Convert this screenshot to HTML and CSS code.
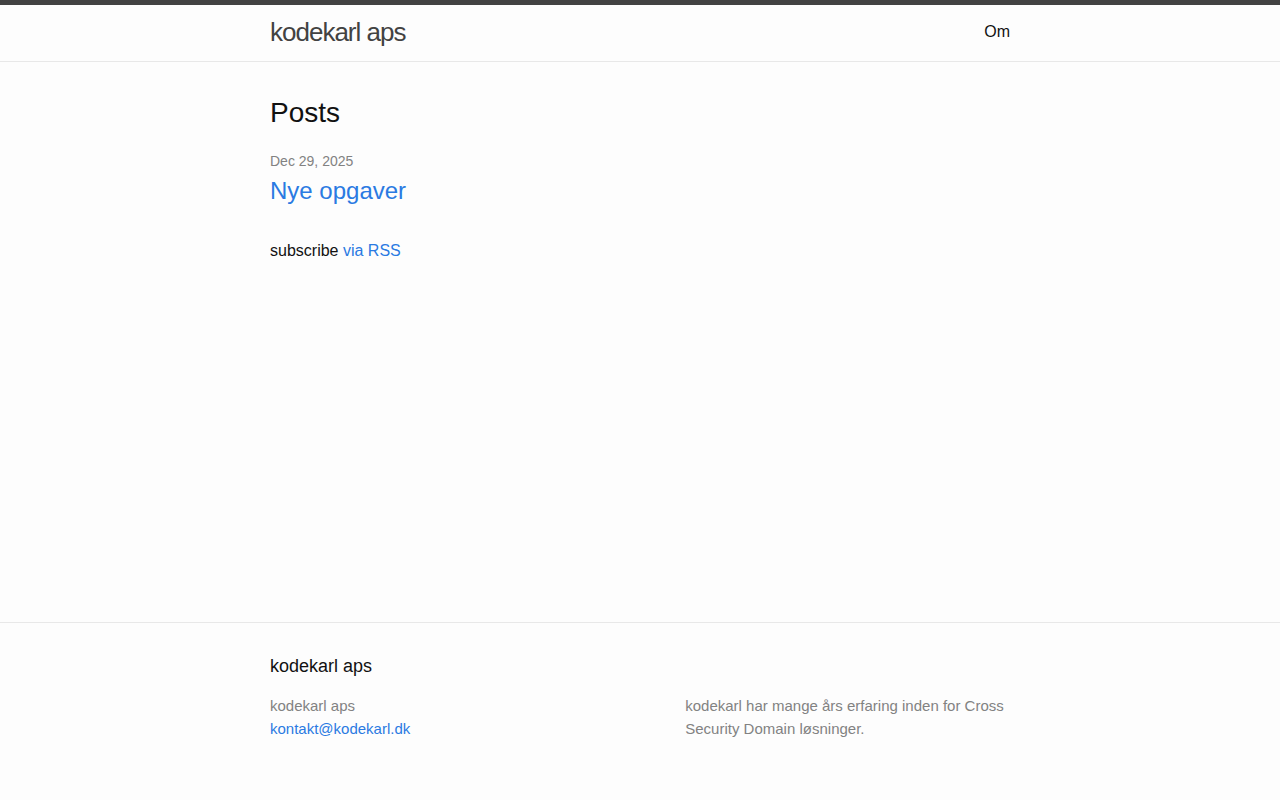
FILE: index.html
```html
<!DOCTYPE html>
<html lang="da">
<head>
<meta charset="utf-8">
<title>kodekarl aps</title>
<link rel="stylesheet" href="styles.css">
</head>
<body>
<header class="site-header">
  <div class="wrapper header-row">
    <a class="site-title" href="#">kodekarl aps</a>
    <nav class="site-nav">
      <a class="page-link" href="#">Om</a>
    </nav>
  </div>
</header>
<main class="page-content">
  <div class="wrapper">
    <div class="home">
      <h2 class="post-list-heading">Posts</h2>
      <ul class="post-list">
        <li>
          <span class="post-meta">Dec 29, 2025</span>
          <h3 class="post-title"><a class="post-link" href="#">Nye opgaver</a></h3>
        </li>
      </ul>
      <p class="rss-subscribe">subscribe <a href="#">via RSS</a></p>
    </div>
  </div>
</main>
<footer class="site-footer">
  <div class="wrapper">
    <h2 class="footer-heading">kodekarl aps</h2>
    <div class="footer-col-wrapper">
      <div class="footer-col footer-col-1">
        <ul class="contact-list">
          <li>kodekarl aps</li>
          <li><a href="#">kontakt@kodekarl.dk</a></li>
        </ul>
      </div>
      <div class="footer-col footer-col-2"></div>
      <div class="footer-col footer-col-3">
        <p>kodekarl har mange års erfaring inden for Cross Security Domain løsninger.</p>
      </div>
    </div>
  </div>
</footer>
</body>
</html>
```

FILE: styles.css
```css
html, body { margin: 0; padding: 0; }
body {
  font-family: "Liberation Sans", Arial, sans-serif;
  font-size: 16px;
  line-height: 1.5;
  font-weight: 400;
  color: #111;
  background: #fdfdfd;
  min-height: 100vh;
  display: flex;
  flex-direction: column;
}
h1, h2, h3, p, ul { margin: 0 0 15px 0; padding: 0; }
h2, h3 { font-weight: 400; }
a { color: #2a7ae2; text-decoration: none; }

.wrapper {
  max-width: 740px;
  margin: 0 auto;
  padding: 0 30px;
}

.site-header {
  border-top: 5px solid #424242;
  border-bottom: 1px solid #e8e8e8;
  min-height: 55.95px;
}
.header-row {
  display: flex;
  justify-content: space-between;
  align-items: flex-start;
}
.site-title {
  font-size: 26px;
  font-weight: 300;
  line-height: 54px;
  letter-spacing: -1px;
  color: #424242;
}
.site-nav { line-height: 54px; }
.page-link { color: #111; line-height: 1.5; }

.page-content {
  padding: 30px 0;
  flex: 1;
}
.post-list-heading { font-size: 28px; }
.post-list { list-style: none; margin-left: 0; }
.post-list > li { margin-bottom: 30px; }
.post-meta { font-size: 14px; color: #828282; }
.post-title { font-size: 16px; }
.post-link { display: block; font-size: 24px; }

.site-footer {
  border-top: 1px solid #e8e8e8;
  padding: 30px 0;
}
.footer-heading { font-size: 18px; margin-bottom: 15px; }
.footer-col-wrapper {
  font-size: 15px;
  color: #828282;
  margin-left: -15px;
  display: flex;
  align-items: flex-start;
}
.footer-col { padding-left: 15px; margin-bottom: 15px; box-sizing: content-box; }
.footer-col-1 { width: calc(35% - 15px); }
.footer-col-2 { width: calc(20% - 15px); }
.footer-col-3 { width: calc(45% - 15px); }
.contact-list { list-style: none; margin-left: 0; }
```
